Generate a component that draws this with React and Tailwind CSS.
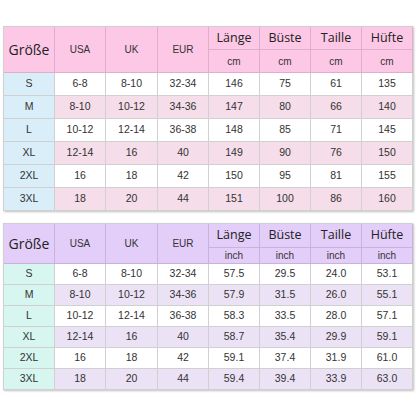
import React from "react";

const t1 = {
  unit: "cm",
  head: "bg-[#fdc8e6] border-[#dcb0cc]",
  size: "bg-[#d9eef9]",
  alt: "bg-[#f5dde9]",
  rows: [
    ["S", "6-8", "8-10", "32-34", "146", "75", "61", "135"],
    ["M", "8-10", "10-12", "34-36", "147", "80", "66", "140"],
    ["L", "10-12", "12-14", "36-38", "148", "85", "71", "145"],
    ["XL", "12-14", "16", "40", "149", "90", "76", "150"],
    ["2XL", "16", "18", "42", "150", "95", "81", "155"],
    ["3XL", "18", "20", "44", "151", "100", "86", "160"],
  ],
};

const t2 = {
  unit: "inch",
  head: "bg-[#e3cdf9] border-[#c9b2dc]",
  size: "bg-[#d6f6ef]",
  alt: "bg-[#ece2f6]",
  rows: [
    ["S", "6-8", "8-10", "32-34", "57.5", "29.5", "24.0", "53.1"],
    ["M", "8-10", "10-12", "34-36", "57.9", "31.5", "26.0", "55.1"],
    ["L", "10-12", "12-14", "36-38", "58.3", "33.5", "28.0", "57.1"],
    ["XL", "12-14", "16", "40", "58.7", "35.4", "29.9", "59.1"],
    ["2XL", "16", "18", "42", "59.1", "37.4", "31.9", "61.0"],
    ["3XL", "18", "20", "44", "59.4", "39.4", "33.9", "63.0"],
  ],
};

function Table({ d, rowsClass }) {
  const cell = "flex items-center justify-center border-r border-b";
  return (
    <div
      className={`grid grid-cols-[51px_51px_52px_51px_51px_51px_51px_51px] ${rowsClass} border-l border-t border-[#d0d0d0] w-[410px] shadow-[1px_1px_2px_rgba(0,0,0,0.25)] text-[#333] font-['Liberation_Sans',Arial,sans-serif]`}
    >
      <div className={`${cell} ${d.head} row-span-2 text-[14px] font-['Open_Sans',sans-serif] text-[#222]`}>Größe</div>
      <div className={`${cell} ${d.head} row-span-2 text-[10px]`}>USA</div>
      <div className={`${cell} ${d.head} row-span-2 text-[10px]`}>UK</div>
      <div className={`${cell} ${d.head} row-span-2 text-[10px]`}>EUR</div>
      {["Länge", "Büste", "Taille", "Hüfte"].map((h) => (
        <div key={h} className={`${cell} ${d.head} text-[12.5px] font-['Open_Sans',sans-serif] text-[#222]`}>{h}</div>
      ))}
      {[0, 1, 2, 3].map((i) => (
        <div key={i} className={`${cell} ${d.head} text-[10px]`}>{d.unit}</div>
      ))}
      {d.rows.map((r, ri) =>
        r.map((v, ci) => (
          <div
            key={ri + "-" + ci}
            className={`${cell} border-[#d0d0d0] text-[10.5px] ${
              ci === 0 ? d.size : ri % 2 === 1 ? d.alt : "bg-white"
            }`}
          >
            {v}
          </div>
        ))
      )}
    </div>
  );
}

export default function App() {
  return (
    <div className="w-[416px] h-[416px] bg-white pl-[3px] pt-[26px]">
      <Table d={t1} rowsClass="grid-rows-[23px_23px_repeat(6,23px)]" />
      <div className="h-[12px]" />
      <Table d={t2} rowsClass="grid-rows-[24px_16px_repeat(6,21px)]" />
    </div>
  );
}
